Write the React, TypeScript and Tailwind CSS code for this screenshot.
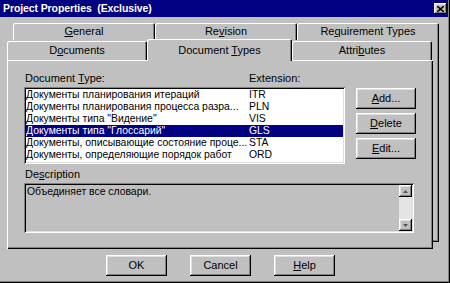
import React from 'react'

const raised = 'bg-[#c0c0c0] shadow-[inset_-1px_-1px_#000,inset_1px_1px_#fff,inset_-2px_-2px_#808080,inset_2px_2px_#dfdfdf]'
const sunken = 'shadow-[inset_1px_1px_#808080,inset_-1px_-1px_#fff,inset_2px_2px_#000,inset_-2px_-2px_#dfdfdf]'
const tab = 'bg-[#c0c0c0] rounded-t-[2px] shadow-[inset_1px_1px_#fff,inset_-1px_0_#000,inset_-2px_0_#808080] flex items-center justify-center'

const rows = [
    { name: 'Документы планирования итераций', ext: 'ITR' },
    { name: 'Документы планирования процесса разра...', ext: 'PLN' },
    { name: 'Документы типа "Видение"', ext: 'VIS' },
    { name: 'Документы типа "Глоссарий"', ext: 'GLS', selected: true },
    { name: 'Документы, описывающие состояние проце...', ext: 'STA' },
    { name: 'Документы, определяющие порядок работ', ext: 'ORD' },
]

const Button = ({ children, className = '' }: { children: React.ReactNode; className?: string }) => (
    <div className={`${raised} h-[21px] flex items-center justify-center ${className}`}>{children}</div>
)

const App = () => {
    return (
        <div className="w-[450px] h-[283px] bg-[#c0c0c0] relative overflow-hidden text-[11px] leading-[13px] text-black font-['Liberation_Sans',Arial,sans-serif] shadow-[inset_-1px_-1px_#000,inset_-2px_-2px_#808080]">
            {/* title bar */}
            <div className="h-[17px] mr-[2px] bg-[#000080] flex items-center justify-between pl-[3px] pr-[1px]">
                <span className="text-white font-bold text-[10.5px] tracking-[-0.1px] whitespace-pre">Project Properties  (Exclusive)</span>
                <div className={`${raised} w-[13px] h-[11px] flex items-center justify-center`}>
                    <svg width="7" height="6" viewBox="0 0 7 6">
                        <path d="M0 0 L7 6 M7 0 L0 6" stroke="#000" strokeWidth="1.6" />
                    </svg>
                </div>
            </div>

            <div className="relative pl-[7px] pt-[6px]">
                {/* back panel of the rear tab row */}
                <div className="absolute left-[13px] top-[23px] w-[426px] h-[202px] bg-[#c0c0c0] shadow-[inset_-1px_-1px_#000,inset_-2px_-2px_#808080]" />

                {/* rear tab row */}
                <div className="relative flex ml-[6px] h-[17px]">
                    <div className={`${tab} w-[142px]`}><span><u>G</u>eneral</span></div>
                    <div className={`${tab} w-[142px]`}><span>Re<u>v</u>ision</span></div>
                    <div className={`${tab} w-[142px]`}><span>Re<u>q</u>uirement Types</span></div>
                </div>

                {/* front tab row */}
                <div className="relative flex items-end h-[20px]">
                    <div className={`${tab} w-[140px] h-[19px]`}><span>D<u>o</u>cuments</span></div>
                    <div className={`${tab} w-[145px] h-[22px] translate-y-[1px] relative z-20`}><span>Document <u>T</u>ypes</span></div>
                    <div className={`${tab} w-[140px] h-[19px]`}><span>Attri<u>b</u>utes</span></div>
                </div>

                {/* front panel */}
                <div className="relative z-10 w-[426px] h-[189px] bg-[#c0c0c0] shadow-[inset_1px_1px_#fff,inset_-1px_-1px_#000,inset_-2px_-2px_#808080] pt-[11px] pl-[17px]">
                    <div className="flex h-[14px] leading-[14px]">
                        <span className="w-[225px] pl-[1px]">Document <u>T</u>ype:</span>
                        <span>Extension:</span>
                    </div>
                    <div className="flex mt-[2px]">
                        <div className={`${sunken} bg-white w-[321px] h-[77px] p-[2px] overflow-hidden`}>
                            {rows.map((r) => (
                                <div
                                    key={r.ext}
                                    className={`flex h-[12px] leading-[12px] whitespace-nowrap text-[10.4px] ${r.selected ? 'bg-[#000080] text-white' : ''}`}
                                >
                                    <span className="w-[223px] overflow-hidden">{r.name}</span>
                                    <span>{r.ext}</span>
                                </div>
                            ))}
                        </div>
                        <div className="flex flex-col gap-[4px] ml-[11px] mt-[1px]">
                            <Button className="w-[60px]"><span><u>A</u>dd...</span></Button>
                            <Button className="w-[60px]"><span><u>D</u>elete</span></Button>
                            <Button className="w-[60px]"><span><u>E</u>dit...</span></Button>
                        </div>
                    </div>
                    <div className="mt-[4px] h-[13px] pl-[1px]">De<u>s</u>cription</div>
                    <div className={`${sunken} bg-[#c0c0c0] mt-[2px] w-[390px] h-[50px] p-[2px] flex`}>
                        <div className="flex-1 pl-[1px] pt-[1px] leading-[12px] text-[10.4px]">Объединяет все словари.</div>
                        <div className="w-[13px] flex flex-col">
                            <div className={`${raised} h-[12px] flex items-center justify-center`}>
                                <svg width="5" height="3" viewBox="0 0 5 3"><path d="M0 3 L2.5 0 L5 3 Z" fill="#555" /></svg>
                            </div>
                            <div className="flex-1 bg-[#e4e4e4]" />
                            <div className={`${raised} h-[12px] flex items-center justify-center`}>
                                <svg width="5" height="3" viewBox="0 0 5 3"><path d="M0 0 L2.5 3 L5 0 Z" fill="#555" /></svg>
                            </div>
                        </div>
                    </div>
                </div>

                {/* dialog buttons */}
                <div className="flex gap-[23px] mt-[6px] ml-[99px]">
                    <Button className="w-[61px]">OK</Button>
                    <Button className="w-[61px]">Cancel</Button>
                    <Button className="w-[61px]"><span><u>H</u>elp</span></Button>
                </div>
            </div>
        </div>
    )
}

export default App
